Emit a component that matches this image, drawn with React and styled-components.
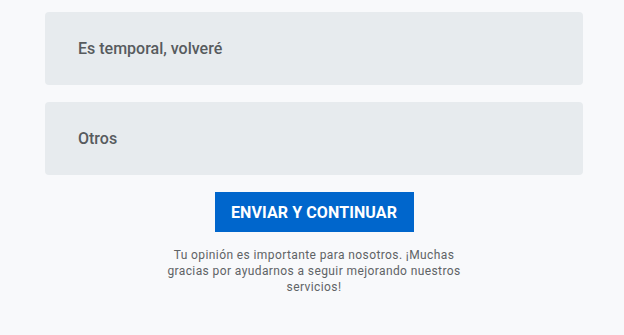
import styled, { createGlobalStyle } from "styled-components";

const GlobalStyle = createGlobalStyle`
  html, body {
    margin: 0;
    padding: 0;
    background: #f8f9fb;
    font-family: Roboto, "Liberation Sans", sans-serif;
  }
`;

const Page = styled.div`
  display: flex;
  flex-direction: column;
  align-items: center;
  padding: 12px 41px 0 45px;
`;

const Options = styled.div`
  width: 100%;
  display: flex;
  flex-direction: column;
  gap: 17px;
`;

const Option = styled.div`
  height: 73px;
  display: flex;
  align-items: center;
  padding: 0 33px;
  background: #e7ebee;
  border-radius: 4px;
  font-size: 16px;
  font-weight: 500;
  color: #575b5e;
  box-sizing: border-box;
`;

const Submit = styled.button`
  margin-top: 17px;
  width: 199px;
  height: 40px;
  border: none;
  background: #0066cc;
  color: #fff;
  font-family: inherit;
  font-size: 16px;
  font-weight: 700;
  letter-spacing: 0.1px;
  cursor: pointer;
`;

const Note = styled.p`
  margin: 15px 0 0;
  width: 302px;
  text-align: center;
  font-size: 12px;
  line-height: 16px;
  letter-spacing: 0.4px;
  color: #5f6366;
`;

export default function App() {
  const options = ["Es temporal, volveré", "Otros"];
  return (
    <>
      <GlobalStyle />
      <Page>
        <Options>
          {options.map((o) => (
            <Option key={o}>{o}</Option>
          ))}
        </Options>
        <Submit>ENVIAR Y CONTINUAR</Submit>
        <Note>
          Tu opinión es importante para nosotros. ¡Muchas gracias por
          ayudarnos a seguir mejorando nuestros servicios!
        </Note>
      </Page>
    </>
  );
}
